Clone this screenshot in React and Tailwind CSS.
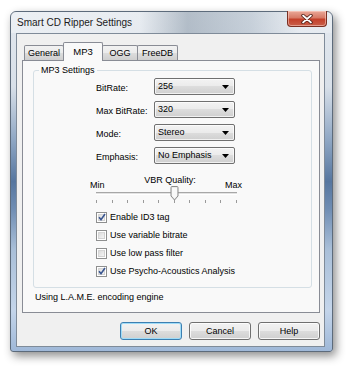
import React from "react";

function Combo({ value }) {
  return (
    <div className="w-[81px] h-[17px] rounded-[2px] border border-[#707070] bg-[linear-gradient(180deg,#f3f3f3_0%,#ebebeb_50%,#dddddd_50%,#cfcfcf_100%)] shadow-[inset_0_0_0_1px_rgba(255,255,255,0.7)] flex items-center pl-[3px] pr-[5px]">
      <span className="flex-1 leading-none">{value}</span>
      <svg width="7" height="4" viewBox="0 0 7 4">
        <path d="M0 0 L7 0 L3.5 4 Z" fill="#000" />
      </svg>
    </div>
  );
}

function Check({ checked, label }) {
  return (
    <div className="flex items-center gap-[3px] h-[18px]">
      <div className="w-[11px] h-[11px] border border-[#8e8f8f] bg-white p-[1px]">
        <div className="w-full h-full bg-[linear-gradient(135deg,#dcdcdc_0%,#f4f4f4_100%)] border border-[#c6c6c6]/60 flex items-center justify-center">
          {checked && (
            <svg width="8" height="8" viewBox="0 0 8 8" className="shrink-0">
              <path d="M1 4.2 L3 6.6 L7 1" stroke="#3a5690" strokeWidth="1.6" fill="none" />
            </svg>
          )}
        </div>
      </div>
      <span className="leading-none">{label}</span>
    </div>
  );
}

function Button({ children, primary }) {
  return (
    <div
      className={
        "w-[62px] h-[18px] rounded-[3px] border flex items-center justify-center leading-none bg-[linear-gradient(180deg,#f2f2f2_0%,#ebebeb_50%,#dddddd_50%,#cfcfcf_100%)] " +
        (primary
          ? "border-[#3c7fb1] shadow-[inset_0_0_0_1px_#9fdcf8]"
          : "border-[#707070] shadow-[inset_0_0_0_1px_rgba(255,255,255,0.8)]")
      }
    >
      {children}
    </div>
  );
}

export default function App() {
  const ticks = [0, 1, 2, 3, 4, 5, 6, 7, 8, 9];
  return (
    <div className="w-[350px] h-[370px] bg-white overflow-hidden pt-[11px] pl-[10px] font-[family-name:'Liberation_Sans',Arial,sans-serif] text-[9px] text-black">
      <div className="w-[323px] h-[341px] rounded-t-[6px] rounded-b-[3px] border border-[#5d6b7b] shadow-[3px_4px_10px_rgba(0,0,0,0.45)] bg-[linear-gradient(180deg,#e3e8ee_0%,#d8e0e9_22%,#8ea6c3_38%,#56769f_50%,#6f8db3_58%,#a9bfd8_70%,#c4d5ea_88%,#9fb8d8_100%)] flex flex-col">
        {/* title bar */}
        <div className="h-[21px] flex items-start rounded-t-[5px] bg-[linear-gradient(90deg,rgba(255,255,255,0.35)_0%,rgba(255,255,255,0.2)_40%,rgba(90,110,130,0.35)_55%,rgba(120,140,160,0.25)_75%,rgba(255,255,255,0.2)_90%)]">
          <span className="pl-[6px] pt-[5px] text-[10px] leading-[11px] text-[#1b1b1b]">Smart CD Ripper Settings</span>
          <div className="ml-auto mr-[5px] -mt-px w-[40px] h-[16px] rounded-b-[4px] border border-t-0 border-[#7a2f22] bg-[linear-gradient(180deg,#eaa898_0%,#d77a66_45%,#c4402a_55%,#c95f4a_100%)] shadow-[inset_0_0_0_1px_rgba(255,220,210,0.5)] flex items-center justify-center">
            <svg width="12" height="10" viewBox="0 0 12 10">
              <path d="M2 1.5 L10 8.5 M10 1.5 L2 8.5" stroke="#4a1a12" strokeWidth="3.4" strokeLinecap="round" />
              <path d="M2 1.5 L10 8.5 M10 1.5 L2 8.5" stroke="#ffffff" strokeWidth="1.7" strokeLinecap="round" />
            </svg>
          </div>
        </div>
        {/* client */}
        <div className="ml-[5px] w-[309px] h-[314px] border border-[#7f8b99] bg-[#f0f0f0] flex flex-col pt-[8px]">
          {/* tabs */}
          <div className="h-[19px] flex items-end ml-[7px] relative z-10">
            <div className="w-[40px] h-[15px] mb-px border border-b-0 border-[#898c95] rounded-t-[2px] bg-[linear-gradient(180deg,#f2f2f2_0%,#ebebeb_50%,#dddddd_50%,#cfcfcf_100%)] flex items-center justify-center leading-none pt-[1px]">General</div>
            <div className="w-[40px] h-[19px] -ml-px border border-b-0 border-[#898c95] rounded-t-[2px] bg-[#f9f9f9] flex items-start justify-center leading-none pt-[4px] text-[9.5px]">MP3</div>
            <div className="w-[36px] h-[15px] mb-px -ml-px border border-b-0 border-[#898c95] rounded-t-[2px] bg-[linear-gradient(180deg,#f2f2f2_0%,#ebebeb_50%,#dddddd_50%,#cfcfcf_100%)] flex items-center justify-center leading-none pt-[1px]">OGG</div>
            <div className="w-[41px] h-[15px] mb-px -ml-px border border-b-0 border-[#898c95] rounded-t-[2px] bg-[linear-gradient(180deg,#f2f2f2_0%,#ebebeb_50%,#dddddd_50%,#cfcfcf_100%)] flex items-center justify-center leading-none pt-[1px]">FreeDB</div>
          </div>
          {/* panel */}
          <div className="-mt-px ml-[5px] w-[298px] h-[253px] border border-[#898c95] bg-[#f9f9f9] flex flex-col">
            <div className="relative mt-[9px] ml-[10px] w-[279px] h-[218px] border border-[#d5dfe5] rounded-[3px] flex flex-col">
              <span className="absolute left-[5px] -top-[6px] px-[2px] bg-[#f9f9f9] leading-[11px]">MP3 Settings</span>
              <div className="ml-[62px] pt-[7px] grid grid-cols-[58px_81px] gap-y-[6px]">
                <div className="flex items-center pt-[3px] leading-none">BitRate:</div>
                <Combo value="256" />
                <div className="flex items-center pt-[3px] leading-none">Max BitRate:</div>
                <Combo value="320" />
                <div className="flex items-center pt-[3px] leading-none">Mode:</div>
                <Combo value="Stereo" />
                <div className="flex items-center pt-[3px] leading-none">Emphasis:</div>
                <Combo value="No Emphasis" />
              </div>
              {/* slider */}
              <div className="ml-[56px] mt-[11px] w-[152px] flex flex-col">
                <div className="text-center pl-[8px] leading-[11px]">VBR Quality:</div>
                <div className="-mt-[6px] flex justify-between leading-[11px]">
                  <span>Min</span>
                  <span>Max</span>
                </div>
                <div className="relative ml-[6px] mt-[1px] w-[141px] h-[3px] border-t border-[#a7a7a7] border-b border-b-white bg-[#e3e3e3]">
                  <svg className="absolute left-[74px] -top-[7px]" width="9" height="15" viewBox="0 0 9 15">
                    <path d="M1 1.5 Q1 0.5 2 0.5 L7 0.5 Q8 0.5 8 1.5 L8 10 L4.5 14 L1 10 Z" fill="#ececec" stroke="#8a8a8a" strokeWidth="1" />
                    <path d="M2 2 L7 2 L7 9.5 L4.5 12.3 L2 9.5 Z" fill="#f9f9f9" />
                  </svg>
                </div>
                <div className="ml-[6px] mt-[5px] w-[141px] h-[3px] flex justify-between">
                  {ticks.map((t) => (
                    <div key={t} className="w-px h-[3px] bg-[#9a9a9a]" />
                  ))}
                </div>
              </div>
              {/* checkboxes */}
              <div className="ml-[62px] mt-[5px] flex flex-col">
                <Check checked label="Enable ID3 tag" />
                <Check label="Use variable bitrate" />
                <Check label="Use low pass filter" />
                <Check checked label="Use Psycho-Acoustics Analysis" />
              </div>
            </div>
            <div className="ml-[12px] mt-[4px] leading-[11px]">Using L.A.M.E. encoding engine</div>
          </div>
          {/* buttons */}
          <div className="mt-[9px] flex justify-end gap-[7px] pr-[4px]">
            <Button primary>OK</Button>
            <Button>Cancel</Button>
            <Button>Help</Button>
          </div>
        </div>
      </div>
    </div>
  );
}
